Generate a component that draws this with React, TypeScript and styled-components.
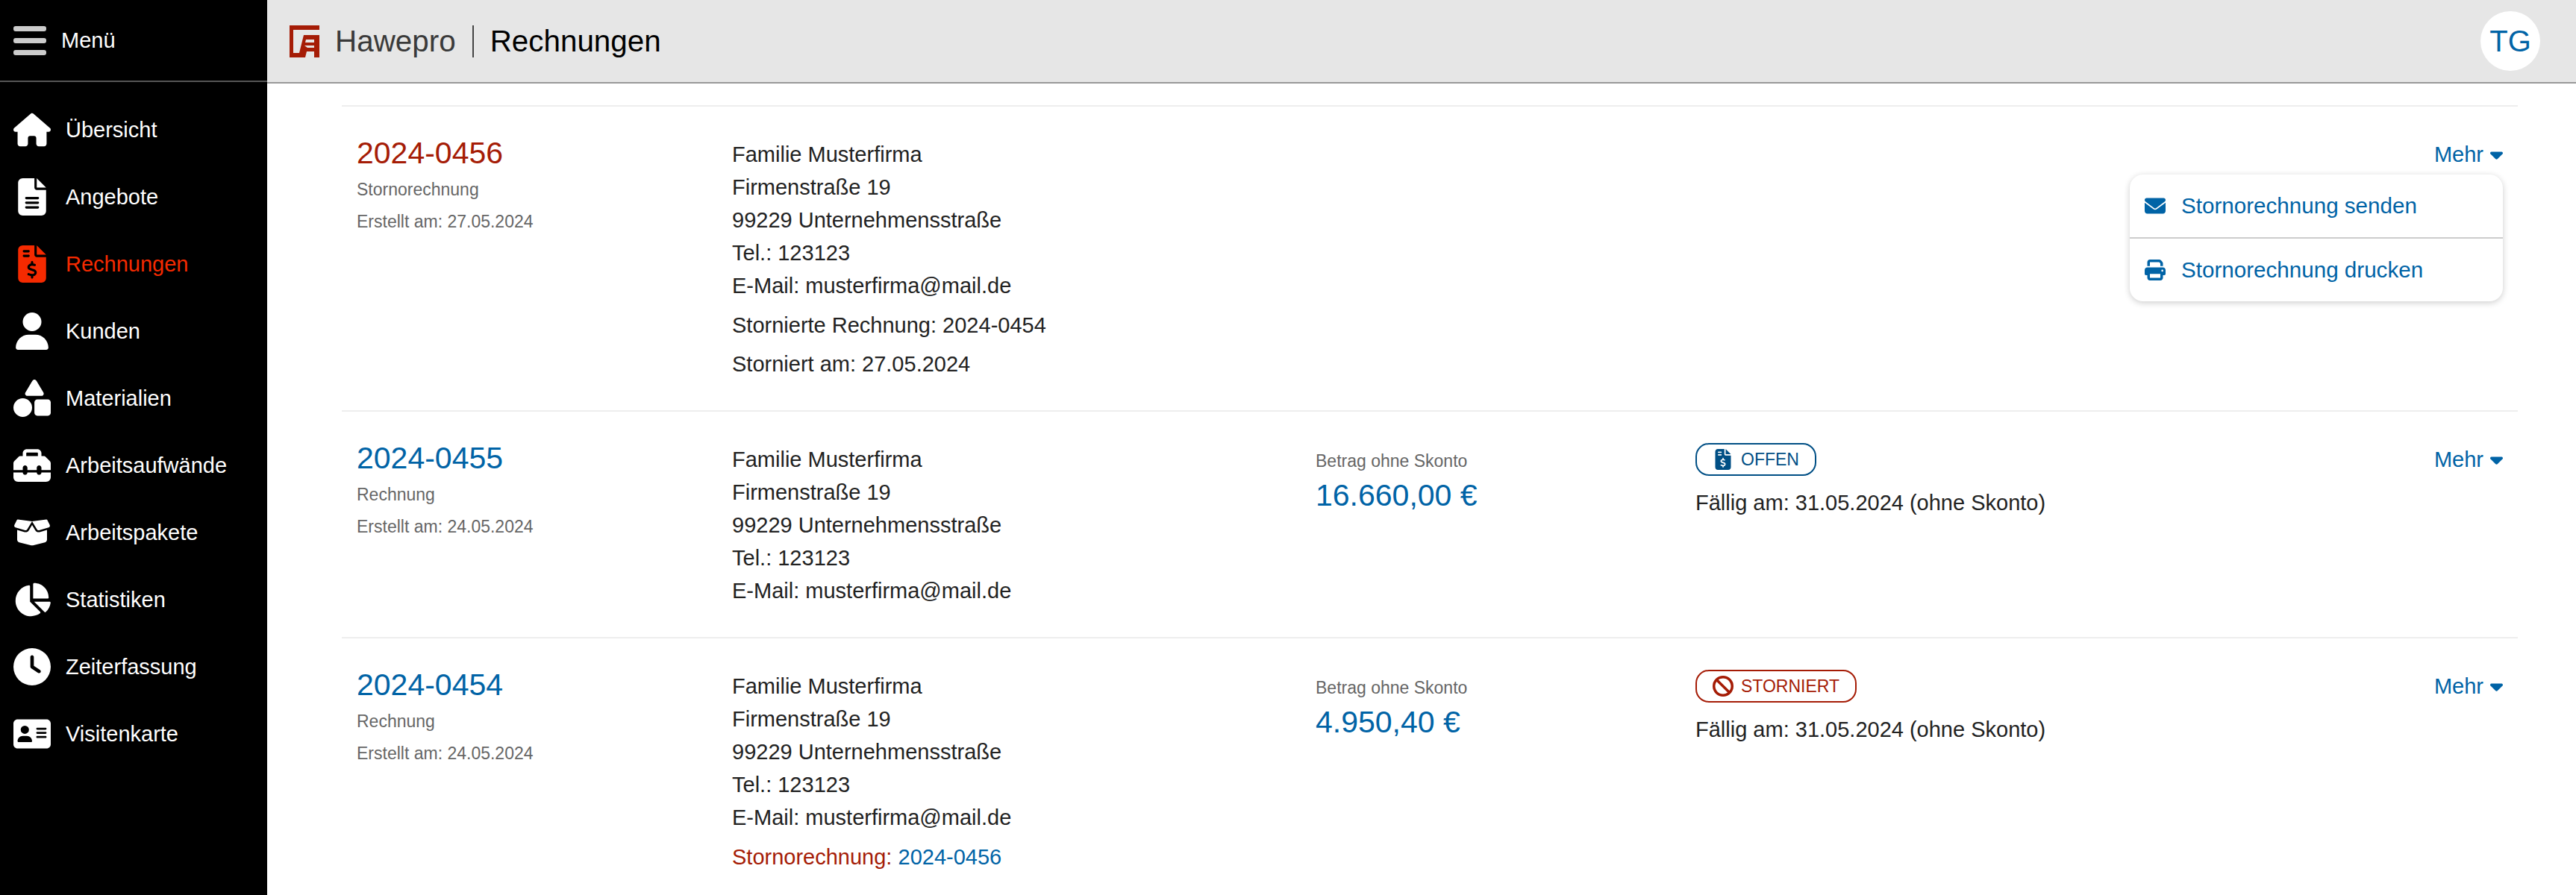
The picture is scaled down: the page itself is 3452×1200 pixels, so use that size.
import React from "react";
import styled, { createGlobalStyle } from "styled-components";
import {
  FaAddressCard,
  FaBan,
  FaBoxOpen,
  FaCaretDown,
  FaChartPie,
  FaClock,
  FaEnvelope,
  FaFileInvoiceDollar,
  FaFileLines,
  FaHouse,
  FaPrint,
  FaShapes,
  FaToolbox,
  FaUser,
} from "react-icons/fa6";

const BLUE = "#0063a6";
const NAVY = "#004f85";
const DARK_RED = "#a51c06";

const navItems = [
  { label: "Übersicht", icon: FaHouse },
  { label: "Angebote", icon: FaFileLines },
  { label: "Rechnungen", icon: FaFileInvoiceDollar, active: true },
  { label: "Kunden", icon: FaUser },
  { label: "Materialien", icon: FaShapes },
  { label: "Arbeitsaufwände", icon: FaToolbox },
  { label: "Arbeitspakete", icon: FaBoxOpen },
  { label: "Statistiken", icon: FaChartPie },
  { label: "Zeiterfassung", icon: FaClock },
  { label: "Visitenkarte", icon: FaAddressCard },
];

export default function App() {
  return (
    <>
      <GlobalStyle />
      <Page>
        <Sidebar>
          <MenuHead>
            <Burger>
              <span />
              <span />
              <span />
            </Burger>
            <MenuLabel>Menü</MenuLabel>
          </MenuHead>
          <Nav>
            {navItems.map((item) => (
              <NavItem key={item.label} $active={item.active}>
                <NavIcon>
                  <item.icon />
                </NavIcon>
                {item.label}
              </NavItem>
            ))}
          </Nav>
        </Sidebar>

        <Main>
          <Header>
            <Logo viewBox="0 0 40 43" aria-hidden="true">
              <path
                fillRule="evenodd"
                d="M0 0H40V6H5V37H13L19 13H40V43H33V35H23L21 43H0ZM22 19L21 23H33V19ZM20 27L24 30H33V27Z"
              />
            </Logo>
            <Brand>Hawepro</Brand>
            <HeaderDivider />
            <PageTitle>Rechnungen</PageTitle>
            <Avatar>TG</Avatar>
          </Header>

          <List>
            <Row>
              <NumberCol>
                <InvoiceNumber $storno>2024-0456</InvoiceNumber>
                <Meta $first>Stornorechnung</Meta>
                <Meta>Erstellt am: 27.05.2024</Meta>
              </NumberCol>
              <Address>
                <Customer />
                <Note>Stornierte Rechnung: 2024-0454</Note>
                <NoteTight>Storniert am: 27.05.2024</NoteTight>
              </Address>
              <div />
              <div />
              <MoreCol>
                <More>
                  Mehr
                  <FaCaretDown />
                </More>
                <Dropdown>
                  <DropdownItem>
                    <FaEnvelope />
                    Stornorechnung senden
                  </DropdownItem>
                  <DropdownItem>
                    <FaPrint />
                    Stornorechnung drucken
                  </DropdownItem>
                </Dropdown>
              </MoreCol>
            </Row>

            <Row>
              <NumberCol>
                <InvoiceNumber>2024-0455</InvoiceNumber>
                <Meta $first>Rechnung</Meta>
                <Meta>Erstellt am: 24.05.2024</Meta>
              </NumberCol>
              <Address>
                <Customer />
              </Address>
              <AmountCol>
                <AmountLabel>Betrag ohne Skonto</AmountLabel>
                <Amount>16.660,00 €</Amount>
              </AmountCol>
              <StatusCol>
                <Badge $color={NAVY}>
                  <FaFileInvoiceDollar />
                  OFFEN
                </Badge>
                <DueDate>Fällig am: 31.05.2024 (ohne Skonto)</DueDate>
              </StatusCol>
              <MoreCol>
                <More>
                  Mehr
                  <FaCaretDown />
                </More>
              </MoreCol>
            </Row>

            <Row>
              <NumberCol>
                <InvoiceNumber>2024-0454</InvoiceNumber>
                <Meta $first>Rechnung</Meta>
                <Meta>Erstellt am: 24.05.2024</Meta>
              </NumberCol>
              <Address>
                <Customer />
                <Note>
                  <StornoLabel>Stornorechnung:</StornoLabel> <StornoLink>2024-0456</StornoLink>
                </Note>
              </Address>
              <AmountCol>
                <AmountLabel>Betrag ohne Skonto</AmountLabel>
                <Amount>4.950,40 €</Amount>
              </AmountCol>
              <StatusCol>
                <Badge $color={DARK_RED}>
                  <FaBan />
                  STORNIERT
                </Badge>
                <DueDate>Fällig am: 31.05.2024 (ohne Skonto)</DueDate>
              </StatusCol>
              <MoreCol>
                <More>
                  Mehr
                  <FaCaretDown />
                </More>
              </MoreCol>
            </Row>
          </List>
        </Main>
      </Page>
    </>
  );
}

function Customer() {
  return (
    <>
      <Line>Familie Musterfirma</Line>
      <Line>Firmenstraße 19</Line>
      <Line>99229 Unternehmensstraße</Line>
      <Line>Tel.: 123123</Line>
      <Line>E-Mail: musterfirma@mail.de</Line>
    </>
  );
}

const GlobalStyle = createGlobalStyle`
  html, body {
    margin: 0;
    height: 100%;
    overflow: hidden;
    background: #fff;
    font-family: "Liberation Sans", Arial, sans-serif;
  }
`;

const Page = styled.div`
  display: flex;
  height: 100vh;
  overflow: hidden;
`;

// sidebar
const Sidebar = styled.aside`
  flex: 0 0 358px;
  background: #000;
  color: #fff;
`;

const MenuHead = styled.div`
  display: flex;
  align-items: center;
  gap: 20px;
  height: 108px;
  padding-left: 18px;
  border-bottom: 2px solid #555;
`;

const Burger = styled.div`
  display: flex;
  flex-direction: column;
  gap: 9px;
  width: 44px;

  span {
    height: 7px;
    border-radius: 3px;
    background: #ccc;
  }
`;

const MenuLabel = styled.span`
  font-size: 29px;
`;

const Nav = styled.nav`
  display: flex;
  flex-direction: column;
  padding-top: 19px;
`;

const NavItem = styled.div<{ $active?: boolean }>`
  display: flex;
  align-items: center;
  gap: 20px;
  height: 90px;
  padding-left: 18px;
  font-size: 29px;
  color: ${(p) => (p.$active ? "#f52a00" : "#fff")};
`;

const NavIcon = styled.span`
  display: flex;
  align-items: center;
  justify-content: center;
  width: 50px;
  height: 50px;

  svg {
    width: 100%;
    height: 100%;
  }
`;

// header
const Main = styled.main`
  flex: 1;
  min-width: 0;
`;

const Header = styled.header`
  display: flex;
  align-items: center;
  height: 110px;
  padding: 0 48px 0 30px;
  background: #e6e6e6;
  border-bottom: 2px solid #999;
`;

const Logo = styled.svg`
  width: 40px;
  height: 43px;
  margin-right: 21px;
  fill: ${DARK_RED};
`;

const Brand = styled.span`
  font-size: 40.4px;
  color: #3a3a3a;
`;

const HeaderDivider = styled.span`
  width: 2px;
  height: 43px;
  margin: 0 22px;
  background: #444;
`;

const PageTitle = styled.h1`
  margin: 0;
  font-size: 40.4px;
  font-weight: 400;
  color: #000;
`;

const Avatar = styled.div`
  display: flex;
  align-items: center;
  justify-content: center;
  width: 80px;
  height: 80px;
  margin-left: auto;
  border-radius: 50%;
  background: #fff;
  color: ${BLUE};
  font-size: 40px;
`;

// invoice list
const List = styled.div`
  margin: 29px 78px 0 100px;
`;

const Row = styled.section`
  display: grid;
  grid-template-columns: 503px 782px 509px 1fr auto;
  padding: 42px 20px 40px;
  border-top: 2px solid #eee;
`;

const NumberCol = styled.div``;

const InvoiceNumber = styled.div<{ $storno?: boolean }>`
  font-size: 41px;
  line-height: 40px;
  color: ${(p) => (p.$storno ? DARK_RED : BLUE)};
`;

const Meta = styled.div<{ $first?: boolean }>`
  margin-top: ${(p) => (p.$first ? "8px" : "0")};
  font-size: 23px;
  line-height: 43px;
  color: #666;
`;

const Address = styled.div``;

const Line = styled.div`
  font-size: 29px;
  line-height: 44px;
  color: #222;
`;

const Note = styled(Line)`
  margin-top: 9px;
`;

const NoteTight = styled(Line)`
  margin-top: 8px;
`;

const StornoLabel = styled.span`
  color: ${DARK_RED};
`;

const StornoLink = styled.span`
  color: ${BLUE};
`;

const AmountCol = styled.div`
  padding-top: 7px;
`;

const AmountLabel = styled.div`
  font-size: 23px;
  line-height: 34px;
  color: #666;
`;

const Amount = styled.div`
  margin-top: 6px;
  font-size: 41px;
  line-height: 46px;
  color: ${BLUE};
`;

const StatusCol = styled.div`
  display: flex;
  flex-direction: column;
  align-items: flex-start;
`;

const Badge = styled.div<{ $color: string }>`
  display: flex;
  align-items: center;
  gap: 10px;
  box-sizing: border-box;
  height: 44px;
  padding: 0 21px;
  border: 2px solid ${(p) => p.$color};
  border-radius: 18px;
  font-size: 23px;
  color: ${(p) => p.$color};

  svg {
    height: 28px;
    width: auto;
  }
`;

const DueDate = styled.div`
  margin-top: 14px;
  font-size: 29px;
  line-height: 44px;
  color: #222;
`;

const MoreCol = styled.div`
  position: relative;
  display: flex;
  justify-content: flex-end;
  align-items: flex-start;
`;

const More = styled.div`
  display: flex;
  align-items: center;
  gap: 9px;
  font-size: 29px;
  line-height: 44px;
  color: ${BLUE};

  svg {
    width: 17px;
    height: 28px;
  }
`;

const Dropdown = styled.div`
  position: absolute;
  top: 49px;
  right: 0;
  width: 500px;
  border-radius: 18px;
  background: #fff;
  box-shadow: 0 2px 8px rgba(0, 0, 0, 0.2);
`;

const DropdownItem = styled.div`
  display: flex;
  align-items: center;
  gap: 21px;
  height: 84px;
  padding-left: 20px;
  font-size: 29.6px;
  color: ${BLUE};

  & + & {
    border-top: 2px solid #ccc;
  }

  svg {
    width: 28px;
    height: 28px;
  }
`;
